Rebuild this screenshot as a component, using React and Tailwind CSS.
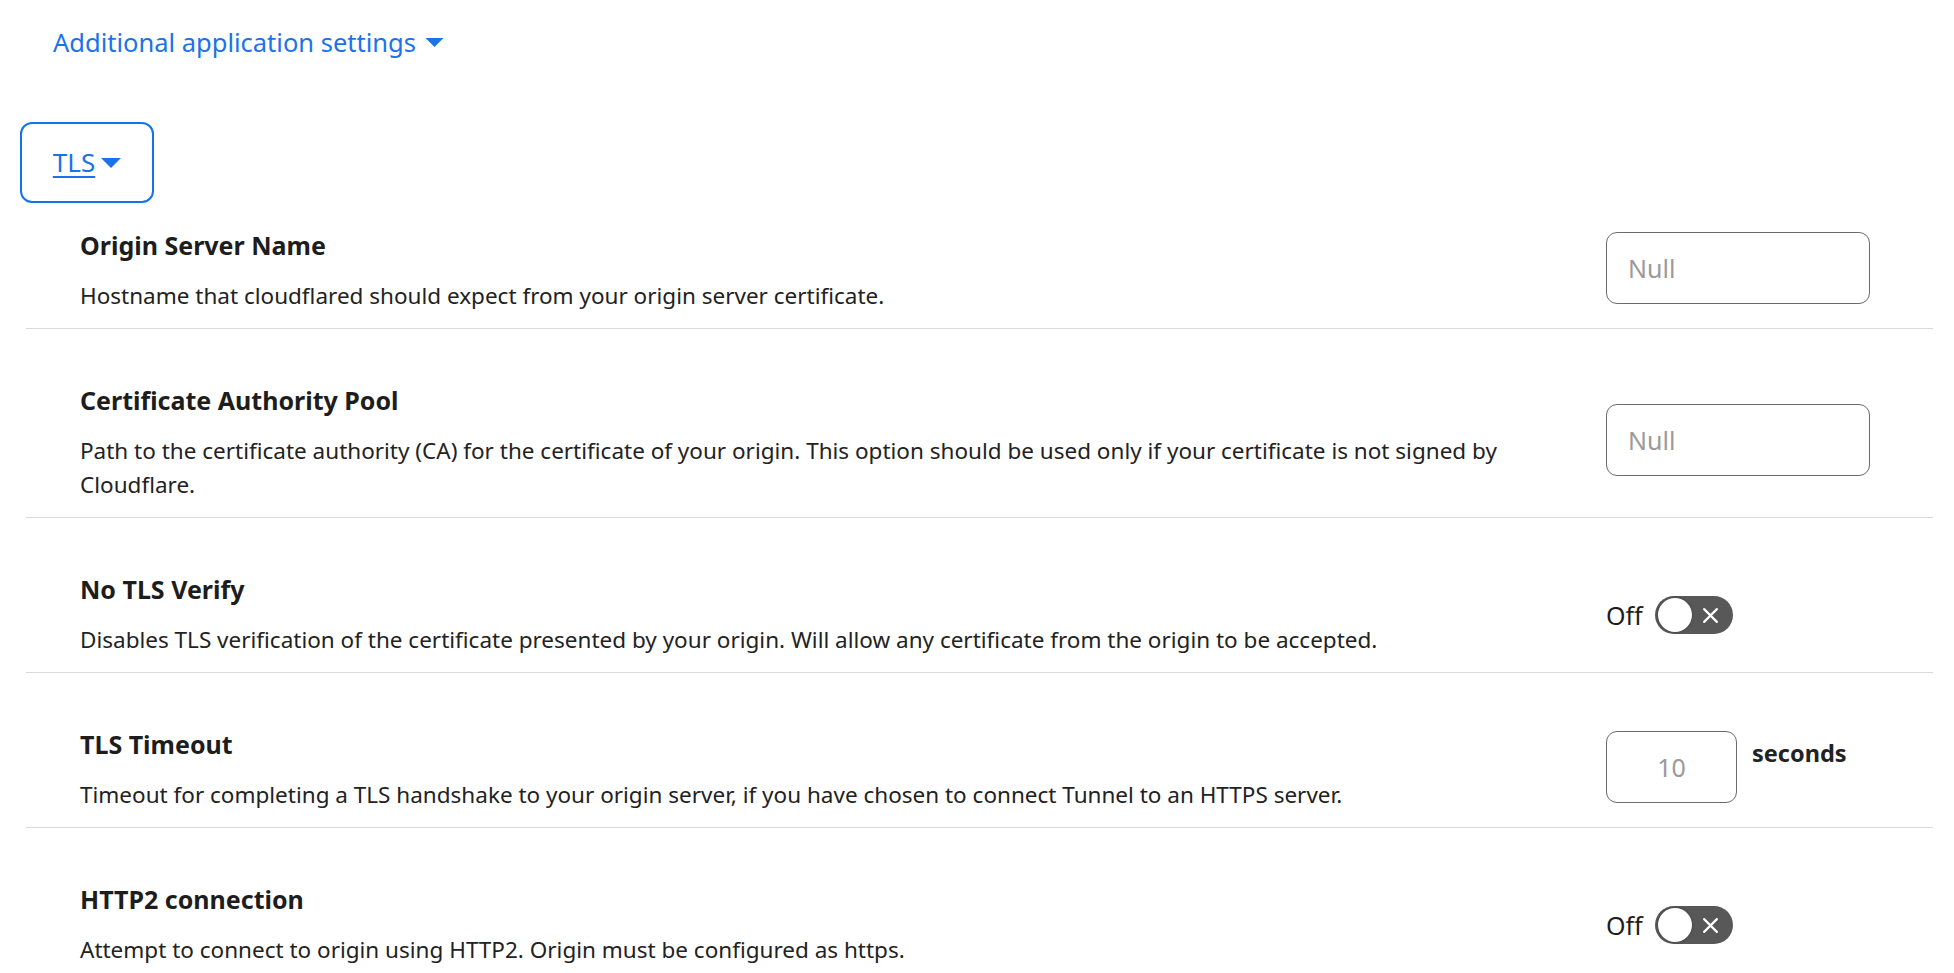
import React from "react";

const settings = [
  {
    title: "Origin Server Name",
    desc: "Hostname that cloudflared should expect from your origin server certificate.",
    control: "text",
    first: true,
  },
  {
    title: "Certificate Authority Pool",
    desc: "Path to the certificate authority (CA) for the certificate of your origin. This option should be used only if your certificate is not signed by Cloudflare.",
    control: "text",
  },
  {
    title: "No TLS Verify",
    desc: "Disables TLS verification of the certificate presented by your origin. Will allow any certificate from the origin to be accepted.",
    control: "toggle",
  },
  {
    title: "TLS Timeout",
    desc: "Timeout for completing a TLS handshake to your origin server, if you have chosen to connect Tunnel to an HTTPS server.",
    control: "seconds",
  },
  {
    title: "HTTP2 connection",
    desc: "Attempt to connect to origin using HTTP2. Origin must be configured as https.",
    control: "toggle",
    last: true,
  },
];

const Caret = ({ className }) => (
  <svg viewBox="0 0 20 10" className={className} fill="currentColor">
    <path d="M0 0 L20 0 L10 10 Z" />
  </svg>
);

const Toggle = () => (
  <div className="flex items-center gap-[12px]">
    <span className="text-[25px] leading-[34px] text-[#1d1d1d]">Off</span>
    <div className="relative w-[78px] h-[38px] rounded-full bg-[#585858]">
      <div className="absolute left-[3px] top-[2px] w-[34px] h-[34px] rounded-full bg-white shadow-[0_0_3px_rgba(0,0,0,0.35)]" />
      <svg
        viewBox="0 0 16 16"
        className="absolute right-[14px] top-[11px] w-[17px] h-[17px]"
        stroke="white"
        strokeWidth="2"
        strokeLinecap="round"
      >
        <path d="M2 2 L14 14 M14 2 L2 14" />
      </svg>
    </div>
  </div>
);

const Control = ({ type }) => {
  if (type === "text") {
    return (
      <input
        type="text"
        placeholder="Null"
        className="mb-[5px] w-[264px] h-[72px] rounded-[11px] border border-[#6b6b6b] px-[21px] text-[25px] placeholder:text-[#9a9a9a] outline-none"
      />
    );
  }
  if (type === "seconds") {
    return (
      <div className="mb-[5px] flex items-start gap-[15px]">
        <input
          type="text"
          placeholder="10"
          className="w-[131px] h-[72px] rounded-[11px] border border-[#6b6b6b] text-center text-[25px] placeholder:text-[#9a9a9a] outline-none"
        />
        <span className="mt-[5px] text-[23.5px] font-bold text-[#222]">seconds</span>
      </div>
    );
  }
  return <Toggle />;
};

const App = () => {
  return (
    <div className="min-h-screen bg-white font-['Noto_Sans',sans-serif] text-[#1d1d1d]">
      <div className="pt-[25px] pl-[53px]">
        <button className="flex items-center gap-[9px] text-[25.5px] leading-[34px] text-[#1a73e8]">
          Additional application settings
          <Caret className="w-[19px] h-[9px]" />
        </button>
      </div>

      <div className="mt-[63px] ml-[20px]">
        <button className="flex items-center justify-center gap-[6px] w-[134px] h-[81px] rounded-[12px] border-2 border-[#1473e6] text-[26px] text-[#1a73e8]">
          <span className="underline underline-offset-4 decoration-[1.5px]">TLS</span>
          <Caret className="w-[20px] h-[10px]" />
        </button>
      </div>

      <div className="ml-[26px] mr-[21px]">
        {settings.map((s) => (
          <div
            key={s.title}
            className={`flex items-center pl-[54px] pb-[15px] ${s.first ? "pt-[25px]" : "pt-[54px]"} ${s.last ? "" : "border-b border-[#d9d9d9]"}`}
          >
            <div className="flex-1 pr-[60px]">
              <h3 className="text-[25px] leading-[34px] font-bold text-[#1d1d1d]">{s.title}</h3>
              <p className="mt-[17px] text-[22.5px] leading-[34px] text-[#222]">{s.desc}</p>
            </div>
            <div className="w-[327px] shrink-0">
              <Control type={s.control} />
            </div>
          </div>
        ))}
      </div>
    </div>
  );
};

export default App;
